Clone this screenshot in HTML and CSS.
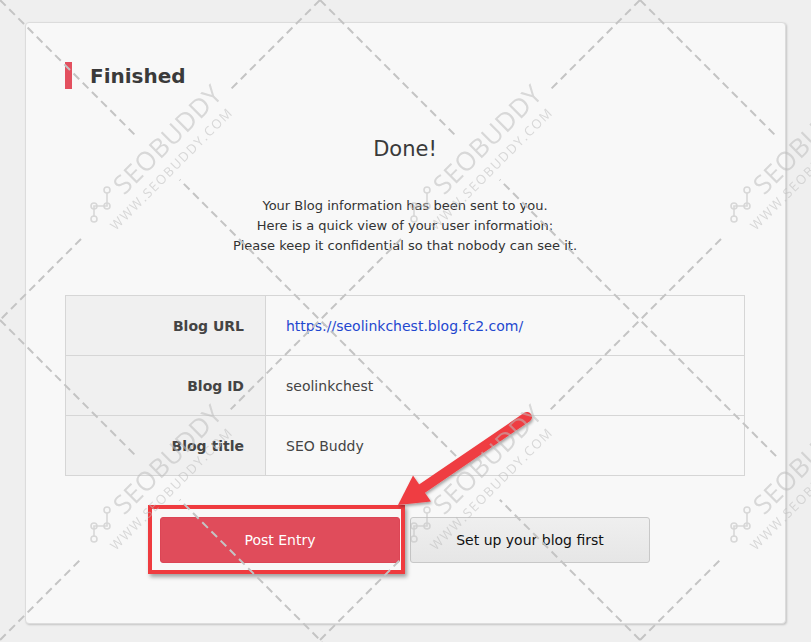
FILE: index.html
```html
<!DOCTYPE html>
<html lang="en">
<head>
<meta charset="utf-8">
<title>Finished</title>
<link rel="stylesheet" href="styles.css">
</head>
<body>
<div class="card">
  <div class="heading">
    <span class="heading-bar"></span>
    <h1 class="heading-text">Finished</h1>
  </div>
  <h2 class="done">Done!</h2>
  <p class="message">Your Blog information has been sent to you.<br>Here is a quick view of your user information:<br>Please keep it confidential so that nobody can see it.</p>
  <table class="info">
    <tr><th>Blog URL</th><td><a class="link" href="#">https://seolinkchest.blog.fc2.com/</a></td></tr>
    <tr><th>Blog ID</th><td>seolinkchest</td></tr>
    <tr><th>Blog title</th><td>SEO Buddy</td></tr>
  </table>
  <div class="actions">
    <div class="highlight-wrap">
      <button class="btn btn-primary">Post Entry</button>
      <span class="highlight-box"></span>
    </div>
    <button class="btn btn-secondary">Set up your blog first</button>
  </div>
</div>

<svg class="arrow" width="811" height="642" viewBox="0 0 811 642" xmlns="http://www.w3.org/2000/svg">
  <defs>
    <filter id="ash" x="-20%" y="-20%" width="140%" height="140%">
      <feDropShadow dx="1" dy="2" stdDeviation="1.5" flood-color="#000" flood-opacity="0.35"/>
    </filter>
  </defs>
  <g filter="url(#ash)">
    <line x1="527" y1="417" x2="420" y2="490" stroke="#ef3e42" stroke-width="10" stroke-linecap="round"/>
    <polygon points="398,505 413,475.5 431,501.5" fill="#ef3e42"/>
  </g>
</svg>

<svg class="watermark" width="811" height="642" viewBox="0 0 811 642" xmlns="http://www.w3.org/2000/svg">
  <defs>
    <mask id="wm-mask" maskUnits="userSpaceOnUse" x="0" y="0" width="811" height="642">
      <rect x="0" y="0" width="811" height="642" fill="#fff"/>
      <g fill="#000">
        <rect x="-110" y="-33" width="210" height="61" transform="translate(160,160) rotate(-45)"/>
        <rect x="-110" y="-33" width="210" height="61" transform="translate(480,160) rotate(-45)"/>
        <rect x="-110" y="-33" width="210" height="61" transform="translate(800,160) rotate(-45)"/>
        <rect x="-110" y="-33" width="210" height="61" transform="translate(160,480) rotate(-45)"/>
        <rect x="-110" y="-33" width="210" height="61" transform="translate(480,480) rotate(-45)"/>
        <rect x="-110" y="-33" width="210" height="61" transform="translate(800,480) rotate(-45)"/>
      </g>
    </mask>
    <g id="wm">
      <g transform="rotate(-45)" fill="#bdbdbd">
        <text x="20" y="0" text-anchor="middle" font-family="'Open Sans', sans-serif" font-size="26" letter-spacing="0.5">SEOBUDDY</text>
        <text x="2" y="19" text-anchor="middle" font-family="'Open Sans', sans-serif" font-size="13" letter-spacing="1.6">WWW.SEOBUDDY.COM</text>
      </g>
      <g fill="none" stroke="#bdbdbd" stroke-width="1.6">
        <path d="M-66 57 V46 H-53 V33"/>
        <circle cx="-66" cy="59" r="3"/>
        <circle cx="-66" cy="46" r="3"/>
        <circle cx="-53" cy="46" r="3"/>
        <circle cx="-53" cy="30" r="3"/>
      </g>
    </g>
  </defs>
  <g mask="url(#wm-mask)" stroke="#c4c4c4" stroke-width="2" stroke-dasharray="8 5" fill="none">
    <line x1="0" y1="320" x2="322" y2="642"/>
    <line x1="0" y1="0" x2="642" y2="642"/>
    <line x1="320" y1="0" x2="811" y2="491"/>
    <line x1="640" y1="0" x2="811" y2="171"/>
    <line x1="320" y1="0" x2="0" y2="320"/>
    <line x1="640" y1="0" x2="0" y2="640"/>
    <line x1="960" y1="0" x2="318" y2="642"/>
    <line x1="1280" y1="0" x2="638" y2="642"/>
  </g>
  <g opacity="0.55">
    <use href="#wm" x="160" y="160"/>
    <use href="#wm" x="480" y="160"/>
    <use href="#wm" x="800" y="160"/>
    <use href="#wm" x="160" y="480"/>
    <use href="#wm" x="480" y="480"/>
    <use href="#wm" x="800" y="480"/>
  </g>
</svg>
</body>
</html>
```

FILE: styles.css
```css
html, body {
  margin: 0;
  padding: 0;
}

body {
  background: #efefef;
  font-family: "DejaVu Sans", Verdana, sans-serif;
  color: #333;
  width: 811px;
  height: 642px;
  overflow: hidden;
  position: relative;
}

.card {
  box-sizing: border-box;
  margin: 22px 0 0 25px;
  width: 761px;
  height: 602px;
  background: #f8f8f8;
  border: 1px solid #dcdcdc;
  border-radius: 4px;
  box-shadow: 1px 1px 2px rgba(0, 0, 0, 0.18);
  padding: 39px 40px 0 39px;
}

.heading {
  display: flex;
  align-items: center;
  gap: 18px;
  height: 27px;
}

.heading-bar {
  width: 7px;
  height: 27px;
  background: #e3505f;
}

.heading-text {
  margin: 0;
  font-size: 20px;
  font-weight: bold;
  line-height: 27px;
  color: #3a3a3a;
  padding-top: 2px;
}

.done {
  margin: 45px 0 0;
  font-size: 21px;
  font-weight: normal;
  line-height: 30px;
  text-align: center;
  color: #3a3a3a;
}

.message {
  margin: 32px 0 0;
  font-size: 13px;
  line-height: 20px;
  text-align: center;
  color: #333;
}

.info {
  margin-top: 39px;
  width: 680px;
  border-collapse: collapse;
  font-size: 14px;
}

.info th,
.info td {
  border: 1px solid #d6d6d6;
  height: 60px;
  box-sizing: border-box;
  padding: 0;
}

.info th {
  width: 200px;
  background: #f0f0f0;
  text-align: right;
  padding-right: 21px;
  font-weight: bold;
  color: #444;
}

.info td {
  background: #f8f8f8;
  padding-left: 20px;
  color: #444;
}

.link {
  color: #1f47cf;
  text-decoration: none;
}

.actions {
  margin-top: 41px;
  display: flex;
  justify-content: center;
  gap: 10px;
}

.highlight-wrap {
  position: relative;
}

.btn {
  width: 240px;
  height: 46px;
  border-radius: 3px;
  font-family: "DejaVu Sans", Verdana, sans-serif;
  font-size: 14px;
  cursor: pointer;
  display: block;
}

.btn-primary {
  background: #e04c5b;
  border: 1px solid #dc4555;
  color: #fff;
}

.btn-secondary {
  background: linear-gradient(#efefef, #e6e6e6);
  border: 1px solid #c8c8c8;
  color: #111;
}

.highlight-box {
  position: absolute;
  left: -12px;
  top: -12px;
  right: -5px;
  bottom: -11px;
  border: 4px solid #ef3b3f;
  box-shadow: 2px 3px 4px rgba(0, 0, 0, 0.35);
  pointer-events: none;
}

.arrow {
  position: absolute;
  left: 0;
  top: 0;
  pointer-events: none;
  z-index: 5;
}

.watermark {
  position: absolute;
  left: 0;
  top: 0;
  pointer-events: none;
  z-index: 10;
}
```
